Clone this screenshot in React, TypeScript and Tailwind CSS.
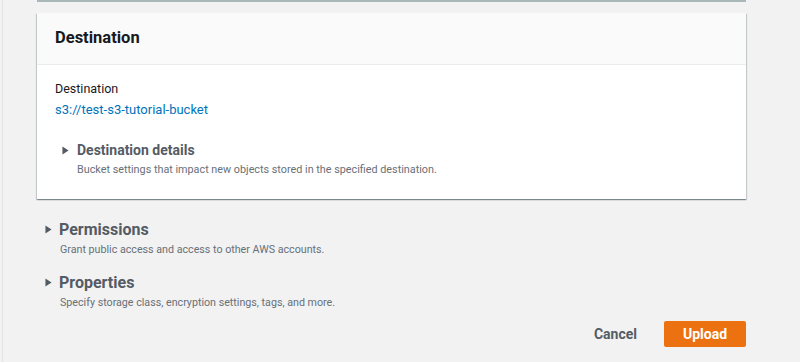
import React from "react";

const Caret = ({ className = "" }: { className?: string }) => (
  <svg viewBox="0 0 8 10" className={className} fill="currentColor">
    <path d="M0.5 0.5 L7.5 5 L0.5 9.5 Z" />
  </svg>
);

const sections = [
  { title: "Permissions", desc: "Grant public access and access to other AWS accounts." },
  { title: "Properties", desc: "Specify storage class, encryption settings, tags, and more." },
];

export default function App() {
  return (
    <div
      className="w-[800px] h-[362px] overflow-hidden bg-[#f2f2f2] text-[#16191f]"
      style={{ fontFamily: 'Roboto, "Open Sans", Arial, sans-serif' }}
    >
      <div className="h-full ml-[2px] border-l border-[#e4e4e4] pl-[34px] pr-[54px]">
        {/* previous card bottom edge */}
        <div className="h-[2px] bg-[#aab7b8]" />

        {/* Destination card */}
        <div className="mt-[11px] bg-white shadow-[0_1px_1px_0_rgba(0,28,36,0.3),1px_1px_1px_0_rgba(0,28,36,0.15),-1px_1px_1px_0_rgba(0,28,36,0.15)]">
          <div className="h-[52px] bg-[#fafafa] border-b border-[#eaeded] px-[18px] flex items-center">
            <h2 className="text-[16.5px] font-bold">Destination</h2>
          </div>
          <div className="px-[18px] pt-[13px] pb-[20px]">
            <div className="text-[12.5px] leading-[21px] text-[#16191f]">Destination</div>
            <a className="block text-[13px] leading-[21px] text-[#0073bb]">s3://test-s3-tutorial-bucket</a>
            <div className="mt-[20px] flex items-center gap-[8px] pl-[7px]">
              <Caret className="w-[7px] h-[9px] text-[#545b64]" />
              <span className="text-[14px] font-bold text-[#545b64] leading-[20px]">Destination details</span>
            </div>
            <div className="pl-[22px] text-[10.8px] leading-[19px] text-[#687078]">
              Bucket settings that impact new objects stored in the specified destination.
            </div>
          </div>
        </div>

        {/* collapsible sections */}
        <div className="mt-[19px] pl-[8px] flex flex-col gap-[13px]">
          {sections.map((s) => (
            <div key={s.title}>
              <div className="flex items-center gap-[7px]">
                <Caret className="w-[7px] h-[9px] text-[#545b64]" />
                <span className="text-[16px] font-bold text-[#545b64] leading-[23px]">{s.title}</span>
              </div>
              <div className="pl-[15px] text-[10.7px] leading-[17px] text-[#687078]">{s.desc}</div>
            </div>
          ))}
        </div>

        {/* actions */}
        <div className="mt-[10px] flex justify-end items-center gap-[27px]">
          <button className="text-[14px] font-bold text-[#545b64]">Cancel</button>
          <button className="w-[82px] h-[26px] rounded-[2px] bg-[#ec7211] text-white text-[14px] font-bold">
            Upload
          </button>
        </div>
      </div>
    </div>
  );
}
